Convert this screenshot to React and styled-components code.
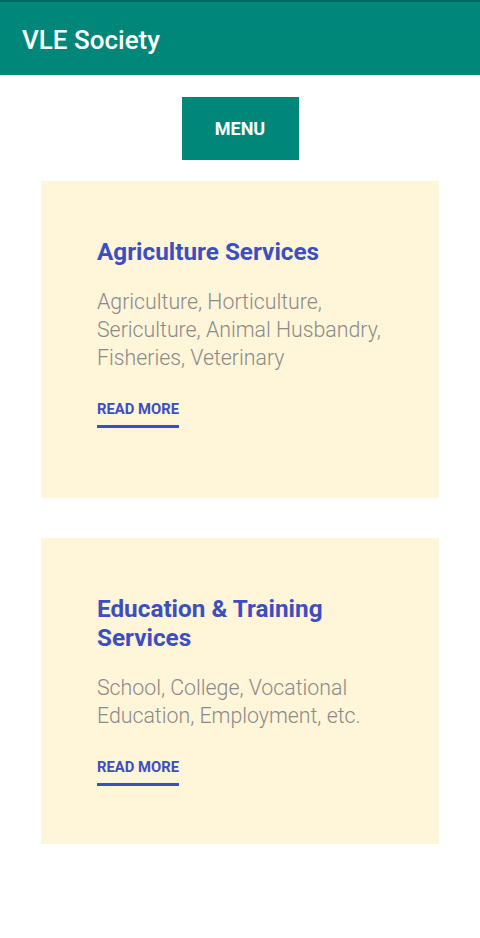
import React from "react";
import styled, { createGlobalStyle } from "styled-components";

const Global = createGlobalStyle`
  html, body { margin: 0; padding: 0; background: #ffffff; }
  body { font-family: Roboto, "Noto Sans", sans-serif; -webkit-font-smoothing: antialiased; }
  * { box-sizing: border-box; }
`;

const Page = styled.div`
  width: 480px;
  min-height: 938px;
  background: #ffffff;
  display: flex;
  flex-direction: column;
`;

const AppBar = styled.header`
  height: 75px;
  background: #00877a;
  border-top: 2px solid #00695f;
  display: flex;
  align-items: center;
  padding: 2px 22px 0;
`;

const Title = styled.h1`
  margin: 0;
  color: #ffffff;
  font-family: Roboto, sans-serif;
  font-weight: 500;
  font-size: 26px;
  letter-spacing: 0;
`;

const Content = styled.main`
  display: flex;
  flex-direction: column;
  align-items: center;
  padding: 22px 41px 40px;
  gap: 21px;
`;

const MenuButton = styled.button`
  width: 117px;
  height: 63px;
  border: none;
  background: #00877a;
  color: #ffffff;
  font-family: Roboto, sans-serif;
  font-weight: 700;
  font-size: 18px;
  letter-spacing: 0;
  cursor: pointer;
`;

const Cards = styled.div`
  align-self: stretch;
  display: flex;
  flex-direction: column;
  gap: 40px;
`;

const Card = styled.section`
  background: #fff5d8;
  padding: 56px 40px ${(p) => p.$bottom}px 56px;
  display: flex;
  flex-direction: column;
  align-items: flex-start;
`;

const CardTitle = styled.h2`
  margin: 0;
  color: #3c4fbf;
  font-family: Roboto, sans-serif;
  font-weight: 700;
  font-size: 24.3px;
  line-height: 29px;
`;

const CardText = styled.p`
  margin: 22px 0 0;
  color: #8a8a8a;
  font-family: Roboto, sans-serif;
  font-weight: 300;
  font-size: 21.3px;
  line-height: 28px;
`;

const ReadMore = styled.a`
  margin-top: 28px;
  color: #3c4fbf;
  font-family: Roboto, sans-serif;
  font-weight: 700;
  font-size: 14.8px;
  line-height: 18px;
  text-decoration: none;
  padding-bottom: 7px;
  border-bottom: 3px solid #3c4fbf;
  cursor: pointer;
`;

const services = [
  {
    title: "Agriculture Services",
    text: "Agriculture, Horticulture, Sericulture, Animal Husbandry, Fisheries, Veterinary",
    bottom: 70,
  },
  {
    title: "Education & Training Services",
    text: "School, College, Vocational Education, Employment, etc.",
    bottom: 58,
  },
];

export default function App() {
  return (
    <>
      <Global />
      <Page>
        <AppBar>
          <Title>VLE Society</Title>
        </AppBar>
        <Content>
          <MenuButton>MENU</MenuButton>
          <Cards>
            {services.map((s) => (
              <Card key={s.title} $bottom={s.bottom}>
                <CardTitle>{s.title}</CardTitle>
                <CardText>{s.text}</CardText>
                <ReadMore>READ MORE</ReadMore>
              </Card>
            ))}
          </Cards>
        </Content>
      </Page>
    </>
  );
}
